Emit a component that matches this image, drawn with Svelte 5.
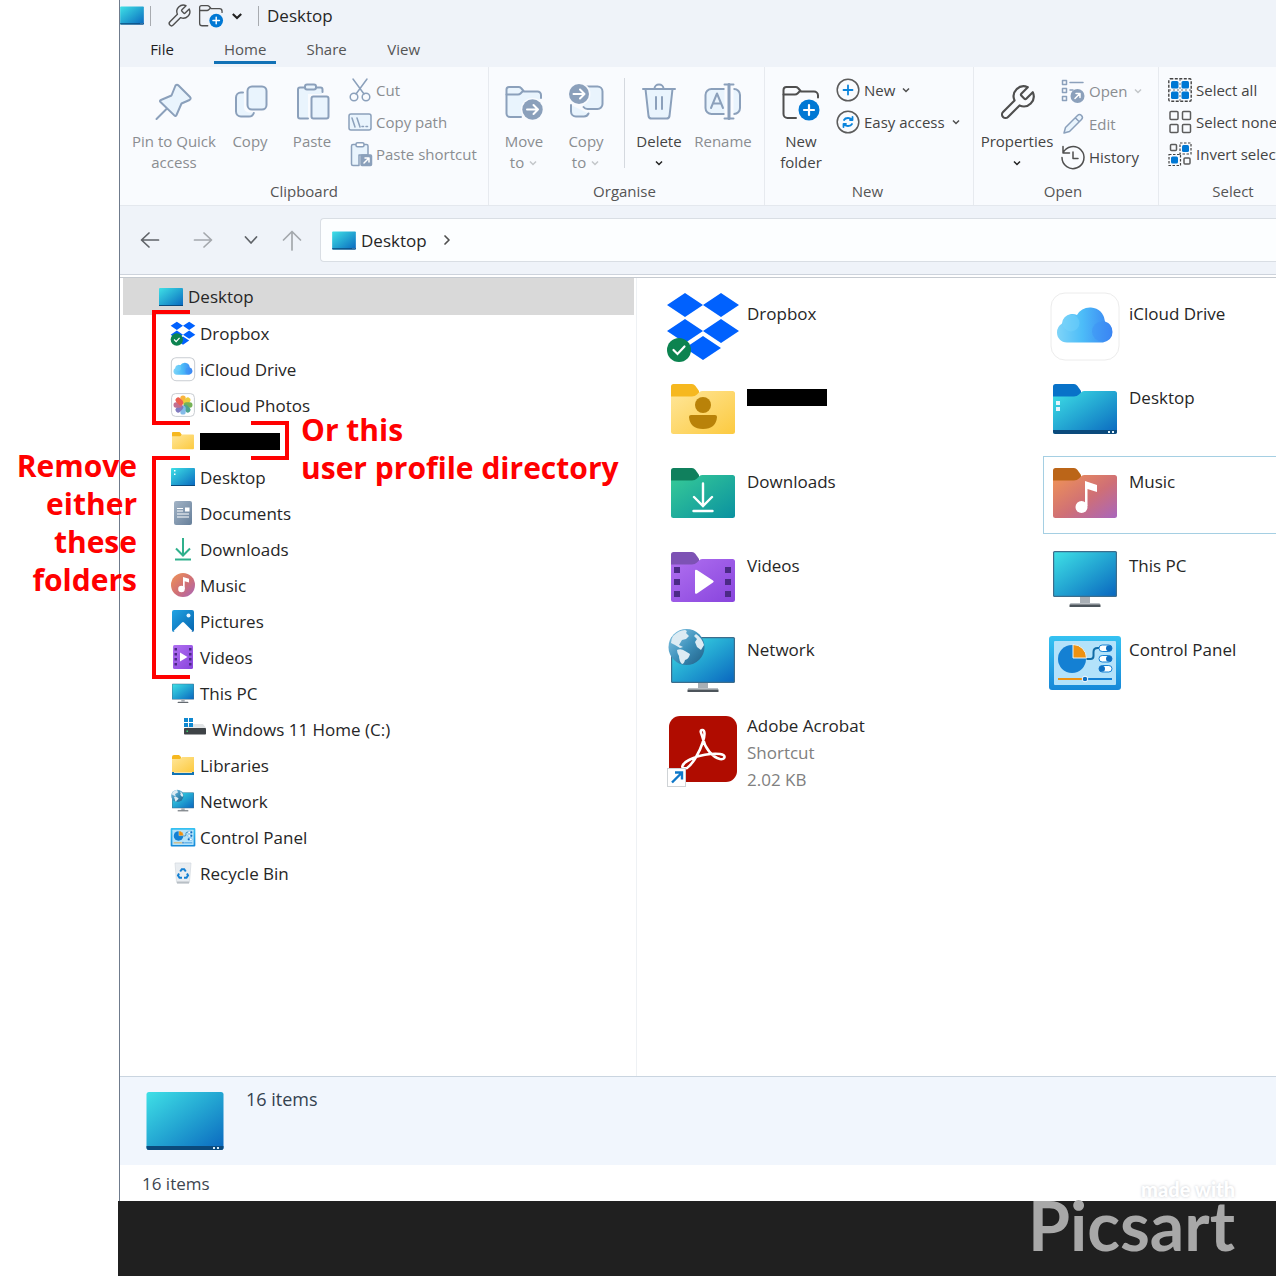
<script>
  const tabs = ['File', 'Home', 'Share', 'View'];

  const tree = [
    { name: 'Desktop', icon: 'screen', level: 0, selected: true },
    { name: 'Dropbox', icon: 'dropbox', level: 1 },
    { name: 'iCloud Drive', icon: 'cloud', level: 1 },
    { name: 'iCloud Photos', icon: 'photos', level: 1 },
    { name: '', icon: 'folder', level: 1 },
    { name: 'Desktop', icon: 'desk', level: 1 },
    { name: 'Documents', icon: 'docs', level: 1 },
    { name: 'Downloads', icon: 'down', level: 1 },
    { name: 'Music', icon: 'music', level: 1 },
    { name: 'Pictures', icon: 'pics', level: 1 },
    { name: 'Videos', icon: 'video', level: 1 },
    { name: 'This PC', icon: 'pc', level: 1 },
    { name: 'Windows 11 Home (C:)', icon: 'drive', level: 2 },
    { name: 'Libraries', icon: 'library', level: 1 },
    { name: 'Network', icon: 'network', level: 1 },
    { name: 'Control Panel', icon: 'panel', level: 1 },
    { name: 'Recycle Bin', icon: 'bin', level: 1 }
  ];

  const files = [
    { name: 'Dropbox', icon: 'dropbox' },
    { name: 'iCloud Drive', icon: 'cloud' },
    { name: '', icon: 'user' },
    { name: 'Desktop', icon: 'deskFolder' },
    { name: 'Downloads', icon: 'downFolder' },
    { name: 'Music', icon: 'musicFolder', hover: true },
    { name: 'Videos', icon: 'videoFolder' },
    { name: 'This PC', icon: 'pc' },
    { name: 'Network', icon: 'network' },
    { name: 'Control Panel', icon: 'panel' },
    { name: 'Adobe Acrobat', icon: 'acrobat', kind: 'Shortcut', size: '2.02 KB' }
  ];

  const wideArt = ['dropbox', 'cloud', 'network', 'panel', 'pc', 'folder'];

  function viewBox(name, big) {
    if (big) return '0 0 72 76';
    return wideArt.includes(name) ? '1 -1 70 70' : '0 0 24 24';
  }
</script>

{#snippet chevron(cls)}
  <svg class="chev {cls}" viewBox="0 0 10 10"><path d="M2 3.500l3 3 3-3" /></svg>
{/snippet}

{#snippet screen(cls)}
  <svg class={cls} viewBox="0 0 78 60">
    <rect x="0.5" y="1" width="77" height="58" rx="2.500" fill="url(#gScreen)" />
    <path d="M.5 55h77v1.500a2.500 2.500 0 0 1-2.500 2.500H3a2.500 2.500 0 0 1-2.500-2.500z" fill="#0b4a7c" />
    <path d="M67 56h2v2h-2zM71 56h2v2h-2z" fill="#d7ecf8" />
  </svg>
{/snippet}

{#snippet wrench(cls)}
  <svg class="line {cls}" viewBox="0 0 24 24">
    <path d="M14.700 6.300a1 1 0 0 0 0 1.400l1.600 1.600a1 1 0 0 0 1.400 0l3.770-3.770a6 6 0 0 1-7.940 7.940l-6.910 6.910a2.120 2.120 0 0 1-3-3l6.910-6.910a6 6 0 0 1 7.940-7.940l-3.760 3.760z" stroke="#4f4f4f" stroke-width="1.300" />
  </svg>
{/snippet}

{#snippet newFolder(cls)}
  <svg class="line {cls}" viewBox="0 0 40 40">
    <path d="M37 14.500V12.500a4 4 0 0 0-4-4H20l-3-3.500q-.8-1-2.500-1H5.500a3 3 0 0 0-3 3v24a4 4 0 0 0 4 4H15" stroke="#4f4f4f" stroke-width="2" />
    <path d="M2.500 11.500H14q1.500 0 2.500-1l2-2" stroke="#4f4f4f" stroke-width="2" />
    <circle cx="28" cy="27" r="10.500" fill="#0078d4" stroke="none" />
    <path d="M28 22v10M23 27h10" stroke="#fff" stroke-width="2.200" />
  </svg>
{/snippet}

{#snippet folderShape(back, front)}
  <path d="M4 10.500a2.500 2.500 0 0 1 2.500-2.500H25q2 0 3.500 2l3.500 5v12H4z" fill={back} />
  <path d="M4 20.500H25q3 0 5-2l2.500-2.500q1.200-1 3-1H65.500a2.500 2.500 0 0 1 2.500 2.500V55.500a2.500 2.500 0 0 1-2.500 2.500H6.500a2.500 2.500 0 0 1-2.500-2.500z" fill={front} />
{/snippet}

{#snippet icon(name, big)}
  <svg class={big ? 'ic-big' : 'ic-small'} viewBox={viewBox(name, big)}>
    {#if name === 'screen'}
      <rect x="0" y="3" width="24" height="18" rx="1" fill="url(#gScreen)" />
      <path d="M0 20h24v1H0z" fill="#0b4a7c" />
    {:else if name === 'dropbox'}
      <path d="M18 1l18 12-18 12L0 13zM54 1l18 12-18 12-18-12zM18 27l18 12-18 12L0 39zM54 27l18 12-18 12-18-12zM36 44l18 12-18 12-18-12z" fill="#0061fe" />
      {#if big}
        <circle cx="12" cy="58" r="12" fill="#0c8350" />
        <path d="M6.500 58l4 4 7-7.500" fill="none" stroke="#fff" stroke-width="2.200" stroke-linecap="round" />
      {:else}
        <circle cx="18" cy="53" r="18" fill="#0c8350" />
        <path d="M10 53l6 6 10-11" fill="none" stroke="#fff" stroke-width="3.500" />
      {/if}
    {:else if name === 'cloud'}
      <rect x="2" y="1" width="68" height="67" rx="14" fill="#fff" stroke={big ? '#ececec' : '#c9cdd2'} stroke-width={big ? 1 : 3} />
      <path d="M18 50.500C12 50.500 8 46 8 40.500q0-6 5-9 1-8 9-9.500 3.500-.5 6 1 4.500-8 14-7.500 12 1 14 14 7.500 2.500 7.500 10.500T54 50.500z" fill="url(#gCloud)" />
      <circle cx="22" cy="31" r="8.500" fill="#7cd6fb" opacity=".35" />
      <circle cx="53" cy="39.500" r="10" fill="#3c8df5" opacity=".4" />
    {:else if name === 'photos'}
      <rect x=".6" y=".6" width="22.800" height="22.800" rx="4" fill="#fff" stroke="#c9cdd2" />
      <g opacity=".85">
        <rect x="9.300" y="2.500" width="5.400" height="8.800" rx="2.600" fill="#f8a71c" />
        <rect x="9.300" y="2.500" width="5.400" height="8.800" rx="2.600" fill="#e8c51b" transform="rotate(45 12 12)" />
        <rect x="9.300" y="2.500" width="5.400" height="8.800" rx="2.600" fill="#5da53a" transform="rotate(90 12 12)" />
        <rect x="9.300" y="2.500" width="5.400" height="8.800" rx="2.600" fill="#2f957c" transform="rotate(135 12 12)" />
        <rect x="9.300" y="2.500" width="5.400" height="8.800" rx="2.600" fill="#6fb0e6" transform="rotate(180 12 12)" />
        <rect x="9.300" y="2.500" width="5.400" height="8.800" rx="2.600" fill="#6a63b4" transform="rotate(225 12 12)" />
        <rect x="9.300" y="2.500" width="5.400" height="8.800" rx="2.600" fill="#b8557c" transform="rotate(270 12 12)" />
        <rect x="9.300" y="2.500" width="5.400" height="8.800" rx="2.600" fill="#ea4434" transform="rotate(315 12 12)" />
      </g>
    {:else if name === 'folder'}
      {@render folderShape('#f6b81f', 'url(#gYellow)')}
    {:else if name === 'library'}
      <path d="M1 4q0-2 2-2h5l2 2v4H1z" fill="#f6b81f" />
      <path d="M1 6h8l2-2h12v15H1z" fill="url(#gYellow)" />
      <path d="M1 19h22v3H1z" fill="#1173b4" />
      <path d="M3 19h18v1H3z" fill="#f9e3a0" />
    {:else if name === 'desk'}
      <rect x="0" y="3" width="24" height="18" rx="1" fill="url(#gScreen)" />
      <path d="M0 20h24v1H0z" fill="#0b4a7c" />
      <path d="M3 5h1.500v1.500H3zM3 8.500h1.500V10H3z" fill="#fff" />
    {:else if name === 'docs'}
      <rect x="3" y="0" width="18" height="24" rx="2" fill="url(#gDocs)" />
      <path d="M6 7.500h6M6 10h6M6 13h12M6 16h12" stroke="#fff" stroke-width="1.200" />
      <rect x="14" y="6.500" width="4.500" height="4" fill="#fff" />
    {:else if name === 'down'}
      <path d="M12 1v17M5 11.500l7 7 7-7" fill="none" stroke="#2fb08c" stroke-width="2" />
      <path d="M4 22.500h16" stroke="#2fb08c" stroke-width="2" />
    {:else if name === 'music'}
      <circle cx="12" cy="12" r="12" fill="url(#gMusic)" />
      <path d="M12 4l6 1.800v3.700l-4.300-1.300V16H12z" fill="#fff" />
      <circle cx="10.500" cy="16" r="3.300" fill="#fff" />
    {:else if name === 'pics'}
      <rect x="1" y="1" width="22" height="22" rx="2" fill="url(#gPics)" />
      <path d="M2.500 22L11 13.500q1-.8 2 0L21.500 22q-.5 1-1.500 1H4q-1 0-1.500-1z" fill="#fff" />
      <circle cx="17.500" cy="6.500" r="2" fill="#e8f6ff" />
    {:else if name === 'video'}
      <rect x="2" y="0" width="20" height="24" rx="1.500" fill="url(#gPurple)" />
      <path d="M3.500 3h2.500v2.500H3.500zM3.500 8h2.500v2.500H3.500zM3.500 13h2.500v2.500H3.500zM3.500 18h2.500v2.500H3.500zM18 3h2.500v2.500H18zM18 8h2.500v2.500H18zM18 13h2.500v2.500H18zM18 18h2.500v2.500H18z" fill="#4b2a86" />
      <path d="M9 7.500v9l7.500-4.500z" fill="#fff" />
    {:else if name === 'pc'}
      <rect x="4" y="7" width="64" height="46" rx="1.500" fill="#3c6d8c" />
      <rect x="5.200" y="8.200" width="61.600" height="43.600" rx=".5" fill="url(#gScreen)" />
      <path d="M31 53h10v7H31z" fill="#a9afb5" />
      <path d="M22 59h28q1 0 1 1v1H21v-1q0-1 1-1z" fill="#b9bec3" />
      <path d="M20.500 60.500h31v2.500h-31z" fill="#4c545b" />
    {:else if name === 'network'}
      <rect x="4" y="9" width="64" height="46" rx="1.500" fill="#3c6d8c" />
      <rect x="5.200" y="10.200" width="61.600" height="43.600" rx=".5" fill="url(#gScreen)" />
      <path d="M31 55h10v6H31z" fill="#a9afb5" />
      <path d="M21 60h30v1.500H21z" fill="#b9bec3" />
      <path d="M20.500 61.500h31v2.500h-31z" fill="#4c545b" />
      <circle cx="19.500" cy="19" r="18" fill="url(#gGlobe)" />
      <path d="M6 8q6-6 12-6 3 1 1 3l3 3-3 3-4 1-3 5 4 2-3 1-5-3-4-2q0-4 2-7zM10 22q4-2 8 1l5 3q-1 5-5 6-1 4-3 4-3-3-3-8-2-3-2-6zM29 6q6 4 8 11l-3 5-4-3-2-5 2-3-3-3z" fill="#dcebf3" />
    {:else if name === 'panel'}
      <rect x="0" y="8" width="72" height="54" rx="3" fill="url(#gPanel)" />
      <rect x="5" y="13" width="62" height="44" rx="1" fill="#b3e2fa" />
      <circle cx="23" cy="31" r="14" fill="#1480d3" />
      <path d="M24 30V16.500A13.500 13.500 0 0 1 37.500 30z" fill="#ee9211" stroke="#e5f4fc" stroke-width="1" />
      <path d="M37.500 31h4q3 0 3-3v-4q0-4 4-4h3" fill="none" stroke="#106ba5" stroke-width="2" />
      <rect x="50" y="17" width="13" height="6.500" rx="3.200" fill="#fff" stroke="#1480d3" />
      <circle cx="60" cy="20.200" r="3" fill="#0f6fc2" />
      <rect x="50" y="27.500" width="13" height="6.500" rx="3.200" fill="#fff" stroke="#1480d3" />
      <circle cx="60" cy="30.700" r="3" fill="#0f6fc2" />
      <rect x="50" y="37.500" width="13" height="6.500" rx="3.200" fill="#fff" stroke="#1480d3" />
      <circle cx="53" cy="40.700" r="3" fill="#0f6fc2" />
      <path d="M9 51h27" stroke="#ee9211" stroke-width="2" />
      <path d="M36 51h27" stroke="#1480d3" stroke-width="2" />
      <circle cx="36" cy="51" r="2.800" fill="#0f6fc2" stroke="#fff" />
    {:else if name === 'drive'}
      <path d="M4 10.500l3-3.500h13l3 4z" fill="#e1e4e6" />
      <path d="M1 1h4v4H1zM6 1h4v4H6zM1 6h4v4H1zM6 6h4v4H6z" fill="#0f88d0" />
      <rect x="1" y="11" width="22" height="6.500" rx=".8" fill="#3e4347" />
      <path d="M3.500 13.500h1.500V15H3.500z" fill="#3bd16f" />
    {:else if name === 'bin'}
      <path d="M4 2h16l-1.500 19q-.1 1-1 1h-11q-.9 0-1-1z" fill="#e9edf1" stroke="#d3d9de" stroke-width=".7" />
      <path d="M6 20.500h12v2H6z" fill="#b8bfc5" />
      <path d="M9.200 10.500l1.600-2.300h2.400l1.600 2.300M16 12.500l1 2-1.500 2.200H13M11 16.700H8.500L7 14.500l1-2" fill="none" stroke="#1480d3" stroke-width="2" />
    {:else if name === 'user'}
      {@render folderShape('#f6b81f', 'url(#gYellow)')}
      <circle cx="36" cy="29" r="8" fill="#b98209" />
      <path d="M24 39h24q2 0 2 2-1 12-14 12T22 41q0-2 2-2z" fill="#b98209" />
    {:else if name === 'deskFolder'}
      {@render folderShape('#0872c8', 'url(#gScreen)')}
      <path d="M4 54h64v1.500a2.500 2.500 0 0 1-2.500 2.500H6.500a2.500 2.500 0 0 1-2.500-2.500z" fill="#0b4a7c" />
      <path d="M7 25h4v4H7zM7 31h4v4H7zM59 55h2v2h-2zM63 55h2v2h-2z" fill="#e5f5fc" />
    {:else if name === 'downFolder'}
      {@render folderShape('#10805d', 'url(#gGreen)')}
      <path d="M36 23.500v22M27 37l9 9 9-9M26.500 51h19" fill="none" stroke="#fff" stroke-width="2.400" stroke-linecap="round" />
    {:else if name === 'musicFolder'}
      {@render folderShape('#bb6518', 'url(#gMusic)')}
      <path d="M36 21l12 4v7l-9.500-3V46H36z" fill="#fff" />
      <circle cx="32.500" cy="47" r="6" fill="#fff" />
    {:else if name === 'videoFolder'}
      {@render folderShape('#7d52b4', 'url(#gPurple)')}
      <path d="M7 23h6v6H7zM7 35h6v6H7zM7 47h6v6H7zM58 23h6v6h-6zM58 35h6v6h-6zM58 47h6v6h-6z" fill="#4b2a86" />
      <path d="M28 27q0-2 2-1l16 10.500q1.500 1 0 2L30 49.500q-2 1-2-1z" fill="#fff" />
    {:else if name === 'acrobat'}
      <rect x="2" y="4" width="68" height="66" rx="11" fill="#b00c00" />
      <path d="M20 56C13 58 14 52 22 48 31 43 45 41 53 42 60 43 58 48 53 47 45 45 38 36 36 27 34 20 32.500 18.500 35 18 38.500 17.500 38 24 35.500 31 33 39 26 52 20 56z" fill="none" stroke="#fff" stroke-width="2.600" />
      <rect x=".5" y="56.500" width="18" height="18" fill="#fff" stroke="#cfd3d6" />
      <path d="M5 70.500l9-9M8 60.500h7v7" fill="none" stroke="#0f78c9" stroke-width="2.400" />
    {/if}
  </svg>
{/snippet}

<svg class="defs" aria-hidden="true">
  <defs>
    <linearGradient id="gScreen" x1="0" y1="0" x2="1" y2="1"><stop offset="0" stop-color="#3fe0e6" /><stop offset=".5" stop-color="#23a5d2" /><stop offset="1" stop-color="#0a67bf" /></linearGradient>
    <linearGradient id="gCloud" x1="0" y1="0" x2="1" y2="0"><stop offset="0" stop-color="#7fd4f8" /><stop offset=".45" stop-color="#4dbdf8" /><stop offset="1" stop-color="#3a82f2" /></linearGradient>
    <linearGradient id="gYellow" x1="0" y1="0" x2="1" y2="1"><stop offset="0" stop-color="#ffe699" /><stop offset="1" stop-color="#fcca40" /></linearGradient>
    <linearGradient id="gDocs" x1="0" y1="0" x2="1" y2="1"><stop offset="0" stop-color="#a3b4c6" /><stop offset="1" stop-color="#667f9a" /></linearGradient>
    <linearGradient id="gMusic" x1="0" y1="0" x2="1" y2="1"><stop offset="0" stop-color="#f09456" /><stop offset=".55" stop-color="#cf6f76" /><stop offset="1" stop-color="#a866bd" /></linearGradient>
    <linearGradient id="gPics" x1="0" y1="0" x2="1" y2="1"><stop offset="0" stop-color="#22a4e4" /><stop offset="1" stop-color="#0564ae" /></linearGradient>
    <linearGradient id="gPurple" x1="0" y1="0" x2="1" y2="1"><stop offset="0" stop-color="#b070f0" /><stop offset="1" stop-color="#8844dd" /></linearGradient>
    <linearGradient id="gGreen" x1="0" y1="0" x2="1" y2="1"><stop offset="0" stop-color="#37cb97" /><stop offset="1" stop-color="#0a91a0" /></linearGradient>
    <linearGradient id="gPanel" x1="0" y1="0" x2="0" y2="1"><stop offset="0" stop-color="#35c2f2" /><stop offset="1" stop-color="#1688d8" /></linearGradient>
    <linearGradient id="gGlobe" x1="0" y1="0" x2="1" y2="1"><stop offset="0" stop-color="#8cc8e6" /><stop offset=".5" stop-color="#3f93bd" /><stop offset="1" stop-color="#1f5f86" /></linearGradient>
  </defs>
</svg>

<div class="stage">
  <main class="window">
    <header class="titlebar">
      {@render screen('s-screen')}
      <span class="t-sep"></span>
      <button class="t-wrench" aria-label="Properties">{@render wrench('i26')}</button>
      <button class="t-new" aria-label="New folder">{@render newFolder('i26')}</button>
      <button class="t-more" aria-label="Customise toolbar">{@render chevron('dark wide')}</button>
      <span class="t-sep"></span>
      <span class="title">Desktop</span>
    </header>

    <nav class="tabs">
      {#each tabs as tab}
        <button class="tab" class:active={tab === 'Home'} class:file={tab === 'File'}>{tab}</button>
      {/each}
    </nav>

    <section class="ribbon">
      <div class="group clipboard">
        <div class="tools">
          <button class="tool w92 dim">
            <svg class="line i40" viewBox="0 0 40 40">
              <path d="M21.500 2.500q1.500-1.500 3 0L36 14q1.500 1.500-.5 3L27.500 20.500 22.500 32q-.8 1.800-2.200.4L6.500 19q-1.300-1.300.4-2L17.500 12.500zM13 25.500L2.500 36" fill="#e9f4fd" />
            </svg>
            Pin to Quick access
          </button>
          <button class="tool w60 dim">
            <svg class="line i40" viewBox="0 0 40 40">
              <path d="M14 9.500H11.500a5 5 0 0 0-5 5v14a5 5 0 0 0 5 5h8a5 5 0 0 0 4.800-4H19a5 5 0 0 1-5-5z" fill="#e9f4fd" stroke="none" />
              <path d="M13 9.500H11a5 5 0 0 0-5 5v14a5 5 0 0 0 5 5h8a5 5 0 0 0 4.800-3.500" />
              <rect x="17.500" y="3.500" width="19" height="23" rx="4.500" fill="#e9f4fd" />
            </svg>
            Copy
          </button>
          <button class="tool w64 dim">
            <svg class="line i40" viewBox="0 0 40 40">
              <path d="M13 4.500H8a2 2 0 0 0-2 2V33.500a2 2 0 0 0 2 2h8V11h14V6.500a2 2 0 0 0-2-2h-5z" fill="#e9f4fd" stroke="none" />
              <path d="M13 4.500H8a2 2 0 0 0-2 2V33.500a2 2 0 0 0 2 2h8M23 4.500h5.500a2 2 0 0 1 2 2V9" />
              <rect x="13" y="1.500" width="11" height="5" rx="2" fill="#e9f4fd" />
              <rect x="19.500" y="13.500" width="17" height="22" rx="2" fill="#e9f4fd" />
            </svg>
            Paste
          </button>
          <div class="small">
            <button class="row dim">
              <svg class="line thin i24" viewBox="0 0 24 24"><path d="M5 1l11 15M19 1L8 16" /><circle cx="6" cy="19" r="3.800" /><circle cx="18" cy="19" r="3.800" /></svg>
              Cut
            </button>
            <button class="row dim">
              <svg class="line thin i24" viewBox="0 0 24 24"><rect x="1" y="4" width="22" height="16" rx="2" fill="#e9f4fd" /><path d="M4 8l3 9M9 8l3 9M14 16.500h1.500M18 16.500h1.500" /></svg>
              Copy path
            </button>
            <button class="row dim">
              <svg class="line thin i24" viewBox="0 0 24 24"><path d="M8 2.500H5a1.500 1.500 0 0 0-1.500 1.500v18A1.500 1.500 0 0 0 5 23.500h6V13h9V4a1.500 1.500 0 0 0-1.500-1.500h-3" fill="#e9f4fd" /><rect x="8" y=".7" width="8" height="4" rx="1.500" fill="#fff" /><rect x="13" y="13" width="10.500" height="10.500" rx="1" fill="#8ba0bb" /><path d="M16 21l4.500-4.500M17 16h4v4" stroke="#fff" /></svg>
              Paste shortcut
            </button>
          </div>
        </div>
        <div class="caption">Clipboard</div>
      </div>

      <div class="group organise">
        <div class="tools">
          <button class="tool w62 dim">
            <svg class="line i40" viewBox="0 0 40 40">
              <path d="M37 15V12a3.500 3.500 0 0 0-3.500-3.500H20l-3-3.500q-.8-1-2.500-1H5a2.500 2.500 0 0 0-2.500 2.500V30.500A3.500 3.500 0 0 0 6 34H17" fill="#e9f4fd" />
              <path d="M2.500 11.500H14q1.500 0 2.500-1l2-2" />
              <circle cx="28.500" cy="26.500" r="11.500" fill="#f9fbfe" stroke="none" />
              <circle cx="28.500" cy="26.500" r="10.200" fill="#8ba0bb" stroke="none" />
              <path d="M23 26.500h11M29.500 22l4.500 4.500-4.500 4.500" stroke="#fff" />
            </svg>
            <span>Move<br />to {@render chevron('pale')}</span>
          </button>
          <button class="tool w62 dim">
            <svg class="line i40" viewBox="0 0 40 40">
              <path d="M5 22v6.500a5 5 0 0 0 5 5h8a5 5 0 0 0 4.500-3" fill="#e9f4fd" />
              <path d="M18 3.500h13.500a5 5 0 0 1 5 5V21a5 5 0 0 1-5 5H21.500a5 5 0 0 1-4-2" fill="#e9f4fd" />
              <circle cx="13" cy="11" r="11.500" fill="#f9fbfe" stroke="none" />
              <circle cx="13" cy="11" r="10" fill="#8ba0bb" stroke="none" />
              <path d="M7.500 11h11M14 6.500l4.500 4.500-4.500 4.500" stroke="#fff" />
            </svg>
            <span>Copy<br />to {@render chevron('pale')}</span>
          </button>
          <span class="split"></span>
          <button class="tool w62">
            <svg class="line i40" viewBox="0 0 40 40">
              <path d="M6.500 6l3 27a3 3 0 0 0 3 2.500h15a3 3 0 0 0 3-2.500l3-27z" fill="#e9f4fd" />
              <path d="M4 6h32M15.500 5.500a4.500 4 0 0 1 9 0M17 14v12M23 14v12" />
            </svg>
            <span>Delete<br />{@render chevron('dark')}</span>
          </button>
          <button class="tool w66 dim">
            <svg class="line i40" viewBox="0 0 40 40">
              <rect x="2.500" y="6" width="34.500" height="25" rx="6" fill="#e9f4fd" />
              <path d="M21.500 4h9v29h-9z" fill="#f9fbfe" stroke="none" />
              <path d="M8 25l6-14.500L20 25M10 20.500h8M21.500 1.500h9M21.500 35.500h9" />
              <path d="M26 1.500v34" stroke-width="3" />
            </svg>
            Rename
          </button>
        </div>
        <div class="caption">Organise</div>
      </div>

      <div class="group new">
        <div class="tools">
          <button class="tool w62">
            {@render newFolder('i40')}
            New folder
          </button>
          <div class="small">
            <button class="row">
              <svg class="line thin i24" viewBox="0 0 24 24"><circle cx="12" cy="12" r="10.800" stroke="#5c5c5c" /><path d="M12 7.500v9M7.500 12h9" stroke="#0a84dc" stroke-width="1.800" /></svg>
              New {@render chevron('mid')}
            </button>
            <button class="row">
              <svg class="line thin i24" viewBox="0 0 24 24"><circle cx="12" cy="12" r="10.800" stroke="#5c5c5c" /><path d="M8 10q1-2 4-2 2 0 4 1.500M16.500 7v3H14M16 14q-1 2-4 2-2 0-4-1.500M7.500 17v-3H10" stroke="#0a84dc" stroke-width="1.800" /></svg>
              Easy access {@render chevron('mid')}
            </button>
          </div>
        </div>
        <div class="caption">New</div>
      </div>

      <div class="group open">
        <div class="tools">
          <button class="tool w82">
            {@render wrench('i40')}
            <span>Properties<br />{@render chevron('dark')}</span>
          </button>
          <div class="small loose">
            <button class="row dim">
              <svg class="line thin i24" viewBox="0 0 24 24"><path d="M1.500 1.500h4v4h-4zM1.500 9.500h4v4h-4zM1.500 17.500h4v4h-4zM9 3.500h13M9 11h3" /><circle cx="16.500" cy="17" r="7" fill="#8ba0bb" stroke="none" /><path d="M14 19.500l4.500-4.500M15 14.500h4v4" stroke="#fff" /></svg>
              Open {@render chevron('pale')}
            </button>
            <button class="row dim">
              <svg class="line thin i24" viewBox="0 0 24 24"><path d="M3 21l1.500-5.500L16.500 3.500q2-2 4 0t0 4L8.500 19.500zM14.500 6l3.500 3.500" fill="#e9f4fd" /></svg>
              Edit
            </button>
            <button class="row">
              <svg class="line thin i24" viewBox="0 0 24 24"><path d="M2 8A11 11 0 1 1 1 12.500M2 1.500V8h6.500M12 7v6.500h5" stroke="#4f4f4f" /></svg>
              History
            </button>
          </div>
        </div>
        <div class="caption">Open</div>
      </div>

      <div class="group select">
        <div class="tools">
          <div class="small">
            <button class="row">
              <svg class="i24" viewBox="0 0 24 24"><rect x=".8" y=".8" width="22.400" height="22.400" rx="1.500" fill="none" stroke="#444" stroke-width="1.400" stroke-dasharray="3 1.500" /><path d="M12 1v22M1 12h22" stroke="#777" stroke-width="1" stroke-dasharray="2 2" /><rect x="3" y="3" width="7.500" height="7.500" rx="1.500" fill="#0078d4" /><rect x="13.500" y="3" width="7.500" height="7.500" rx="1.500" fill="#0078d4" /><rect x="3" y="13.500" width="7.500" height="7.500" rx="1.500" fill="#0078d4" /><rect x="13.500" y="13.500" width="7.500" height="7.500" rx="1.500" fill="#0078d4" /></svg>
              Select all
            </button>
            <button class="row">
              <svg class="line thin i24" viewBox="0 0 24 24"><g stroke="#5c5c5c"><rect x="2" y="1.500" width="8" height="8" rx="1" /><rect x="14.500" y="1.500" width="8" height="8" rx="1" /><rect x="2" y="14.500" width="8" height="8" rx="1" /><rect x="14.500" y="14.500" width="8" height="8" rx="1" /></g></svg>
              Select none
            </button>
            <button class="row">
              <svg class="i24" viewBox="0 0 24 24"><rect x="2.500" y="2.500" width="6" height="6" rx="1" fill="none" stroke="#5c5c5c" stroke-width="1.500" /><rect x="16" y="16" width="6" height="6" rx="1" fill="none" stroke="#5c5c5c" stroke-width="1.500" /><path d="M12 1h11v11H12zM1 12.500h11.500v11H1z" fill="none" stroke="#444" stroke-width="1.200" stroke-dasharray="2.500 1.500" /><rect x="14" y="3" width="7" height="7" rx="1.500" fill="#0078d4" /><rect x="3" y="14.500" width="7" height="7" rx="1.500" fill="#0078d4" /></svg>
              Invert selection
            </button>
          </div>
        </div>
        <div class="caption">Select</div>
      </div>
    </section>

    <nav class="navbar">
      <button aria-label="Back"><svg class="line i24" viewBox="0 0 24 24"><path d="M20.500 12H4M11 5l-7.500 7 7.500 7" stroke="#5f6368" stroke-width="1.700" /></svg></button>
      <button aria-label="Forward"><svg class="line i24" viewBox="0 0 24 24"><path d="M3.500 12h16.500M13 5l7.500 7-7.500 7" stroke="#a4a8ad" stroke-width="1.700" /></svg></button>
      <button aria-label="Recent"><svg class="line i24" viewBox="0 0 24 24"><path d="M6.500 9l5.500 6 5.500-6" stroke="#5f6368" stroke-width="1.700" /></svg></button>
      <button aria-label="Up"><svg class="line i24" viewBox="0 0 24 24"><path d="M12 22V4M3.500 12L12 3.500l8.500 8.500" stroke="#a4a8ad" stroke-width="1.700" /></svg></button>
      <div class="address">
        {@render screen('s-screen')}
        <a href="#desktop">Desktop</a>
        <svg class="line a-chev" viewBox="0 0 10 10"><path d="M3 1l4 4-4 4" stroke="#4f4f4f" stroke-width="1.700" /></svg>
      </div>
    </nav>

    <div class="content">
      <ul class="tree">
        {#each tree as node}
          <li>
            <button class="node level{node.level}" class:selected={node.selected} aria-label={node.name || 'User profile'}>
              {@render icon(node.icon, false)}
              {#if node.name}<span>{node.name}</span>{:else}<span class="redact"></span>{/if}
            </button>
          </li>
        {/each}
      </ul>

      <div class="files">
        {#each files as file}
          <button class="file-item" class:hover={file.hover} class:detailed={file.kind} aria-label={file.name || 'User profile'}>
            {@render icon(file.icon, true)}
            <span class="meta">
              {#if file.name}<span>{file.name}</span>{:else}<span class="redact in-files"></span>{/if}
              {#if file.kind}<span class="sub">{file.kind}</span><span class="sub">{file.size}</span>{/if}
            </span>
          </button>
        {/each}
      </div>
    </div>

    <section class="details">
      {@render screen('d-screen')}
      <span>16 items</span>
    </section>
    <footer class="status">16 items</footer>
  </main>

  <div class="desk">
    <div class="watermark">
      <span class="made">made with</span>
      <span class="brand">Picsart</span>
    </div>
  </div>

  <div class="bracket top"></div>
  <div class="bracket profile"></div>
  <div class="bracket folders"></div>
  <p class="note note-left">Remove<br />either<br />these<br />folders</p>
  <p class="note note-right">Or this<br />user profile directory</p>
</div>

<style>
  :global(body) {
    margin: 0;
    background: #fff;
  }
  * {
    box-sizing: border-box;
  }
  button {
    font: inherit;
    color: inherit;
    background: none;
    border: 0;
    padding: 0;
    margin: 0;
    text-align: left;
  }
  svg {
    display: block;
    flex: none;
    overflow: visible;
  }
  .defs {
    position: absolute;
    width: 0;
    height: 0;
  }
  .stage {
    position: relative;
    min-height: 100vh;
    display: flex;
    flex-direction: column;
    overflow: hidden;
    font-family: 'Open Sans', 'Noto Sans', sans-serif;
    font-size: 17px;
    color: #262626;
  }
  .window {
    flex: 1;
    display: flex;
    flex-direction: column;
    margin-left: 119px;
    border-left: 1px solid #6f7b8c;
    min-width: 0;
  }
  .line {
    fill: none;
    stroke: #8ba0bb;
    stroke-width: 2;
    stroke-linecap: round;
    stroke-linejoin: round;
  }
  .thin {
    stroke-width: 1.5;
  }
  .i24 { width: 24px; height: 24px; }
  .i26 { width: 26px; height: 26px; }
  .i40 { width: 40px; height: 40px; }
  .chev {
    display: inline-block;
    width: 10px;
    height: 10px;
    fill: none;
    stroke-width: 1.5;
  }
  .dark { stroke: #222; }
  .mid { stroke: #4f4f4f; }
  .pale { stroke: #c3c6ca; }
  .wide { width: 14px; height: 14px; }
  .s-screen { width: 24px; height: 19px; }

  .titlebar {
    display: flex;
    align-items: center;
    height: 31px;
    background: #eff3f9;
  }
  .t-sep {
    width: 1px;
    height: 20px;
    margin-left: 6px;
    background: #a8abb0;
  }
  .t-wrench { margin-left: 15px; }
  .t-new { margin-left: 6px; }
  .t-more { margin: 0 8px 0 6px; }
  .t-more svg { display: block; }
  .title { margin-left: 8px; }

  .tabs {
    display: flex;
    align-items: flex-start;
    gap: 20px;
    height: 36px;
    padding: 1px 0 0 20px;
    background: #eff3f9;
    font-size: 15px;
    color: #555;
  }
  .tab {
    height: 32px;
    min-width: 54px;
    padding: 4px 10px 0;
    line-height: 24px;
    text-align: center;
    border-bottom: 3px solid transparent;
  }
  .tab.file { min-width: 44px; margin-right: 10px; color: #1f1f1f; }
  .tab.active { border-color: #1272b6; }

  .ribbon {
    display: flex;
    height: 139px;
    background: #f9fbfe;
    border-bottom: 1px solid #e4e8ee;
    font-size: 15px;
    color: #444;
    overflow: hidden;
  }
  .group {
    flex: none;
    display: flex;
    flex-direction: column;
    border-right: 1px solid #e7eaef;
  }
  .clipboard { width: 369px; padding-left: 8px; }
  .organise { width: 276px; padding-left: 4px; }
  .new { width: 209px; padding-left: 5px; }
  .open { width: 185px; padding-left: 2px; }
  .select { width: 152px; padding-left: 5px; }
  .tools {
    display: flex;
    height: 113px;
  }
  .caption {
    padding-right: 8px;
    line-height: 22px;
    text-align: center;
    color: #555;
  }
  .tool {
    display: flex;
    flex-direction: column;
    align-items: center;
    gap: 8px;
    padding-top: 16px;
    line-height: 21px;
    text-align: center;
  }
  .dim { color: #8a8d91; }
  .w60 { width: 60px; }
  .w62 { width: 62px; }
  .w64 { width: 64px; }
  .w66 { width: 66px; }
  .w82 { width: 82px; }
  .w92 { width: 92px; }
  .split {
    width: 1px;
    height: 90px;
    margin: 11px 3px 0 7px;
    background: #d5d9df;
  }
  .small {
    display: flex;
    flex-direction: column;
    gap: 8px;
    padding: 11px 0 0 4px;
  }
  .loose { gap: 9px; padding-top: 12px; padding-left: 3px; }
  .row {
    display: flex;
    align-items: center;
    gap: 4px;
    height: 24px;
    white-space: nowrap;
  }
  .row .chev { margin-left: 2px; }

  .navbar {
    display: flex;
    align-items: center;
    height: 69px;
    padding-left: 18px;
    background: #eff3f9;
    border-bottom: 1px solid #cdd3dc;
  }
  .navbar button { margin-right: 29px; }
  .navbar button:nth-of-type(2) { margin-right: 24px; }
  .navbar button:nth-of-type(3) { margin-right: 17px; }
  .navbar button:nth-of-type(4) { margin-right: 16px; }
  .address {
    flex: 1;
    display: flex;
    align-items: center;
    gap: 5px;
    height: 44px;
    padding-left: 11px;
    background: #fcfeff;
    border: 1px solid #d9dee4;
    border-right: 0;
    border-radius: 4px 0 0 4px;
  }
  .address a { color: inherit; text-decoration: none; }
  .a-chev { width: 10px; height: 10px; margin-left: 10px; }

  .content {
    flex: 1;
    display: flex;
    margin-top: 2px;
    border-top: 1px solid #c5cad0;
  }
  .tree {
    flex: none;
    width: 517px;
    margin: 0;
    padding: 0 2px 0 3px;
    list-style: none;
    border-right: 1px solid #eef1f4;
  }
  .node {
    display: flex;
    align-items: center;
    gap: 5px;
    width: 100%;
    height: 36px;
    white-space: nowrap;
  }
  .level0 { height: 37px; padding-left: 36px; }
  .level1 { padding-left: 48px; }
  .level2 { padding-left: 60px; }
  .selected { background: #d9d9d9; }
  .ic-small { width: 24px; height: 24px; }
  .ic-big { width: 72px; height: 76px; }
  .redact {
    display: block;
    width: 80px;
    height: 17px;
    background: #000;
  }
  .in-files { margin-top: 5px; }

  .files {
    flex: 1;
    min-width: 0;
    display: grid;
    grid-template-columns: 376px 376px;
    grid-auto-rows: 78px;
    align-content: start;
    gap: 6px;
    padding: 10px 0 0 24px;
    overflow: hidden;
  }
  .file-item {
    display: flex;
    align-items: flex-start;
    gap: 8px;
    padding: 3px 5px;
    border: 1px solid transparent;
    line-height: 27px;
  }
  .hover { border-color: #a5cfe3; }
  .meta {
    display: flex;
    flex-direction: column;
    padding-top: 8px;
  }
  .detailed .meta { padding-top: 0; }
  .sub { color: #808080; }

  .details {
    display: flex;
    align-items: flex-start;
    gap: 22px;
    height: 89px;
    padding: 9px 0 0 26px;
    line-height: 26px;
    background: #f1f6fd;
    border-top: 1px solid #cad5e0;
    color: #34424f;
    font-size: 18px;
  }
  .d-screen { width: 78px; height: 60px; margin-top: 5px; }
  .status {
    height: 36px;
    padding-left: 22px;
    line-height: 38px;
    color: #3d4650;
  }
  .desk {
    position: relative;
    height: 75px;
    margin-left: 118px;
    background: #202020;
  }
  .watermark {
    position: absolute;
    right: 41px;
    bottom: 25px;
    display: flex;
    flex-direction: column;
    align-items: flex-end;
    font-family: Lato, sans-serif;
    font-weight: 700;
  }
  .made {
    font-size: 20px;
    line-height: 20px;
    font-weight: 900;
    color: #fff;
    text-shadow: 0 0 3px #c9ccd2;
  }
  .brand {
    font-size: 68px;
    line-height: 52px;
    color: #a8a8a8;
  }

  .bracket {
    position: absolute;
    left: 152px;
    width: 38px;
    border: 4px solid #f00;
    border-right: 0;
  }
  .top { top: 310px; height: 115px; }
  .folders { top: 456px; height: 223px; }
  .profile {
    top: 421px;
    left: 251px;
    height: 39px;
    border-right: 4px solid #f00;
    border-left: 0;
  }
  .note {
    position: absolute;
    margin: 0;
    color: #f00;
    font-size: 30px;
    line-height: 38px;
    font-weight: 700;
    white-space: nowrap;
  }
  .note-left {
    top: 447px;
    left: 0;
    width: 137px;
    text-align: right;
  }
  .note-right { top: 411px; left: 301px; }
</style>
